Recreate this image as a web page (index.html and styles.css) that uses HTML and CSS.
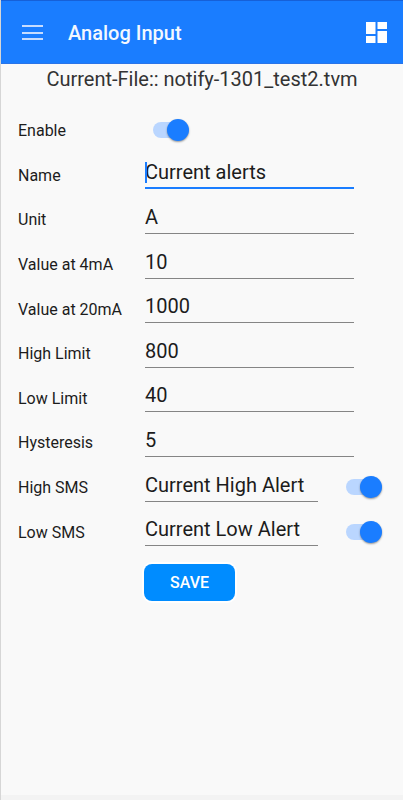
FILE: index.html
```html
<!DOCTYPE html>
<html lang="en">
<head>
<meta charset="utf-8">
<meta name="viewport" content="width=device-width, initial-scale=1">
<title>Analog Input</title>
<link rel="stylesheet" href="styles.css">
</head>
<body>
<header class="app-bar">
  <button class="icon-button" type="button" aria-label="Menu">
    <svg width="22" height="16" viewBox="0 0 22 16"><path d="M1 1h21M1 8h21M1 14h21" stroke="#c6dcff" stroke-width="2"/></svg>
  </button>
  <h1 class="app-title">Analog Input</h1>
  <button class="icon-button" type="button" aria-label="Dashboard">
    <svg width="21" height="21" viewBox="0 0 21 21"><path fill="#fff" d="M0 0h9.500v12H0zM11.500 0H21v7h-9.500zM0 14h9.500v7H0zM11.500 9H21v12h-9.500z"/></svg>
  </button>
</header>
<main class="content">
  <p class="file-name">Current-File:: notify-1301_test2.tvm</p>
  <form>
    <div class="fields">
      <div class="row"><label class="label" for="enable">Enable</label><input class="switch switch-first" id="enable" type="checkbox" role="switch" checked></div>
      <div class="row"><label class="label" for="name">Name</label><span class="field"><input class="text active" id="name" type="text" value="Current alerts"><span class="caret"></span></span></div>
      <div class="row"><label class="label" for="unit">Unit</label><span class="field"><input class="text" id="unit" type="text" value="A"></span></div>
      <div class="row"><label class="label" for="v4">Value at 4mA</label><span class="field"><input class="text" id="v4" type="text" value="10"></span></div>
      <div class="row"><label class="label" for="v20">Value at 20mA</label><span class="field"><input class="text" id="v20" type="text" value="1000"></span></div>
      <div class="row"><label class="label" for="high">High Limit</label><span class="field"><input class="text" id="high" type="text" value="800"></span></div>
      <div class="row"><label class="label" for="low">Low Limit</label><span class="field"><input class="text" id="low" type="text" value="40"></span></div>
      <div class="row"><label class="label" for="hyst">Hysteresis</label><span class="field"><input class="text" id="hyst" type="text" value="5"></span></div>
      <div class="row row-sms"><label class="label" for="hsms">High SMS</label><span class="field"><input class="text" id="hsms" type="text" value="Current High Alert"></span><input class="switch" type="checkbox" role="switch" aria-label="High SMS enabled" checked></div>
      <div class="row row-sms"><label class="label" for="lsms">Low SMS</label><span class="field"><input class="text" id="lsms" type="text" value="Current Low Alert"></span><input class="switch" type="checkbox" role="switch" aria-label="Low SMS enabled" checked></div>
    </div>
    <button class="save" type="submit">SAVE</button>
  </form>
</main>
<footer class="bottom-strip"></footer>
</body>
</html>
```
FILE: styles.css
```css
* { box-sizing: border-box; }

body {
  display: flex;
  flex-direction: column;
  min-height: 100vh;
  margin: 0;
  border-left: 1px solid #d6d6d6;
  background: #f9f9f9;
  color: #1c1c1c;
  font-family: Roboto, "Liberation Sans", sans-serif;
}

.app-bar {
  display: flex;
  align-items: center;
  height: 64px;
  padding: 1px 16px 0 20px;
  border-top: 1px solid #1660d8;
  border-bottom: 1px solid #2a74e8;
  background: #1a7dff;
}

.icon-button {
  display: flex;
  padding: 0;
  border: 0;
  background: none;
}

.app-title {
  flex: 1;
  margin: 0 0 0 25px;
  padding-top: 1px;
  color: #f3f8ff;
  font-size: 20px;
  font-weight: 500;
  line-height: 24px;
}

.content { flex: 1; }

.file-name {
  margin: 0;
  padding-top: 3px;
  color: #333;
  font-size: 20px;
  line-height: 24px;
  text-align: center;
}

.fields {
  display: grid;
  grid-auto-rows: 1fr;
  min-height: 446px;
  margin-top: 17px;
  padding-left: 17px;
}

.row {
  display: flex;
  align-items: center;
  padding-right: 49px;
}

.row-sms { padding-right: 21px; }

.label {
  width: 127px;
  flex: none;
  padding-top: 2px;
  font-size: 16px;
  line-height: 20px;
}

.field {
  position: relative;
  display: flex;
  flex: 1;
  min-width: 0;
}

.row-sms .field { margin-right: 28px; }

.text {
  width: 100%;
  height: 29px;
  padding: 0 0 4px;
  border: 0;
  border-bottom: 1px solid #858585;
  border-radius: 0;
  outline: 0;
  background: none;
  color: inherit;
  font: 20px/24px Roboto, "Liberation Sans", sans-serif;
}

.active { border-bottom: 2px solid #1a7dff; }

.caret {
  position: absolute;
  top: 2px;
  left: 0;
  width: 2px;
  height: 21px;
  background: #1a7dff;
}

.switch {
  appearance: none;
  display: flex;
  align-items: center;
  justify-content: flex-end;
  flex: none;
  width: 30px;
  height: 16px;
  margin: 0 6px 0 0;
  border-radius: 8px;
  background: #bad6ff;
}

.switch::before {
  content: "";
  flex: none;
  width: 22px;
  height: 22px;
  margin-right: -6px;
  border-radius: 50%;
  background: #1a7dff;
  box-shadow: 0 1px 2px rgba(0, 0, 0, .4);
}

.switch-first { margin-left: 8px; }

.save {
  display: block;
  width: 91px;
  height: 37px;
  margin: 10px 0 0 143px;
  padding: 0;
  border: 0;
  border-radius: 8px;
  background: #008cff;
  box-shadow: 0 0 0 2px #fff;
  color: #fff;
  font: 500 16px/20px Roboto, "Liberation Sans", sans-serif;
}

.bottom-strip {
  height: 5px;
  background: #f3f3f3;
}
```
